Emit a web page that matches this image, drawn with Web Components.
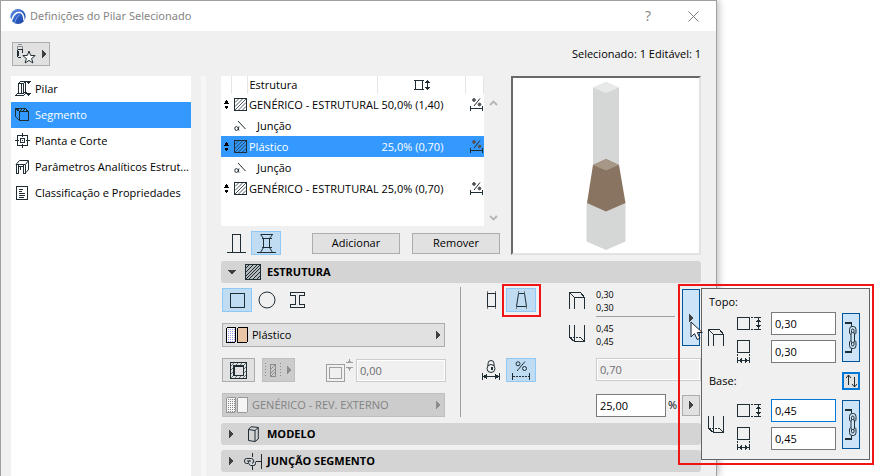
<!DOCTYPE html>
<html lang="pt">
<head>
<meta charset="utf-8">
<title>Definições do Pilar Selecionado</title>
<style>
  html, body { margin: 0; background: #fff; }
  body {
    font: 11px/16px "Open Sans", "Noto Sans", sans-serif;
    color: #000; overflow-x: hidden;
    --ink: #1f2d35; --sel: #3399ff; --panel: #f0f0f0;
  }
</style>
</head>
<body>
<settings-dialog></settings-dialog>
<script>
const hatch = (id, step, color) =>
  `<pattern id="${id}" width="${step}" height="${step}" patternUnits="userSpaceOnUse"><path d="M-1 1L1 -1M0 ${step}L${step} 0M${step - 1} ${step + 1}L${step + 1} ${step - 1}" stroke="${color}" stroke-width="1" shape-rendering="auto"/></pattern>`;

const ICONS = {
  logo: [16, 17, `<defs><linearGradient id="g" x1="0" y1="0" x2="1" y2="1"><stop offset="0" stop-color="#6f9be6"/><stop offset=".5" stop-color="#2f5fc4"/><stop offset="1" stop-color="#1d3f9c"/></linearGradient></defs>
    <g shape-rendering="auto"><circle cx="8" cy="8.500" r="7.600" fill="url(#g)" stroke="none"/><path d="M1.500 12.500C3 7.500 6 4.200 9.500 4.200C12.500 4.400 13.800 8 14 12.500" stroke="#fff" stroke-width="1.500"/><path d="M4.500 15Q6 9 9.800 6.500" stroke="#7fa5ea" stroke-width="1"/></g>`],
  favorite: [20, 22, `<g stroke="#8b9094"><path d="M1.500 2.500v4M6.500 2.500v4M2 1.500h4M2 3.500h4"/></g><path d="M1.500 6.500h5v3M1.500 6.500v7M2 14.500h3M2.500 8v5"/><path shape-rendering="auto" d="M13 8l1.600 4.400 4.600.2-3.600 2.900 1.300 4.500-3.900-2.600-3.900 2.600 1.300-4.500-3.600-2.900 4.600-.2z" fill="#fff"/>`],
  pillar: [17, 17, `<path d="M3.500 2.500h5v10h-5zM5.500 .5h5v11h-2M3.500 2.500l2-2M8.500 2.500l2-2M6.500 3v9"/><path d="M3.500 11.500l-3 3h8l3-3"/><path d="M11.500 .5h4l-2 2zM11.500 12.500h4l-2 2z" fill="#1f2d35"/>`],
  segment: [16, 16, `<defs>${hatch('h', 3, '#1f2d35')}</defs><path d="M.5 1.500h10l3 3h-9z" fill="url(#h)"/><path d="M.5 1.500v8l4 4M4.500 4.500h9v9h-9zM10.500 1.500l3 3"/>`],
  plan: [16, 16, `<path d="M2.500 2.500h10v10h-10zM5.500 5.500h4v4h-4zM7.500 0v4M7.500 11v4M0 7.500h4M11 7.500h4M7 7.500h1"/>`],
  analytic: [16, 16, `<path shape-rendering="auto" d="M1 5.500L4.500 1.500H13.500L10.500 5.500z"/><path d="M1.500 5.500v9M3.500 6v8M10.500 5.500v9M8.500 6v8M13.500 1.500v9M4 7.500h5M1 14.500h3M8 14.500h3M5.500 8v3"/><path shape-rendering="auto" d="M11 13.500l2.500-3"/>`],
  classify: [16, 16, `<path d="M1.500 1.500h11v13h-11zM4 4.500h4M4 6.500h3M4 8.500h6M4 10.500h6M4 12.500h5"/>`],
  height: [17, 12, `<path d="M1.500 1.500h7v9h-7zM0 1.500h10M0 10.500h10"/><path d="M13.500 2v8" stroke-width="1"/><path d="M11 4l2.500-3.500L16 4zM11 8l2.500 3.500L16 8z" fill="#1f2d35" stroke="none"/>`],
  sort: [5, 9, `<path d="M0 3.500L2.500 0L5 3.500zM0 5.500L2.500 9L5 5.500z" fill="#000" stroke="none"/>`],
  hatchbox: [13, 13, `<path d="M.5 .5h12v12h-12z"/><path shape-rendering="auto" d="M1 4.500L4.500 1M1 8.500L8.500 1M1 12L12 1M4.500 12L12 4.500M8.500 12L12 8.500" stroke-width=".8"/>`],
  angle: [13, 12, `<path shape-rendering="auto" d="M4 1l7.500 8"/><path shape-rendering="auto" d="M5 6.500Q4.500 10.500 2.500 10.500Q.8 10.500 .8 8.500Q.8 6.500 2.500 6.500Q4 6.500 5 10.500"/>`],
  percent: [14, 13, `<g shape-rendering="auto"><path d="M4 8L10 .5"/><circle cx="4" cy="2" r="1.400" fill="#555" stroke="#555"/><circle cx="9.500" cy="6.500" r="1.400" fill="#555" stroke="#555"/></g><path d="M.5 8v5M12.500 8v5M1 10.500h11"/>`],
  up: [9, 9, `<path d="M1 6l3.500-3.500L8 6" stroke="#b5b5b5" stroke-width="1.800" shape-rendering="auto"/>`],
  down: [9, 9, `<path d="M1 3l3.500 3.500L8 3" stroke="#b5b5b5" stroke-width="1.800" shape-rendering="auto"/>`],
  simple: [19, 19, `<path d="M5.500 18V.5h8V18M0 18.500h19"/>`],
  complex: [19, 19, `<path d="M3.500 .5h12M6.500 4.500h6v9h-6zM0 18.500h19M4.500 4.500h10M4.500 13.500h10"/><path shape-rendering="auto" d="M3.500 .5l3 4M15.500 .5l-3 4M6.500 13.500l-3 5M12.500 13.500l3 5"/>`],
  tridown: [8, 5, `<path d="M0 0h8L4 4.500z" fill="#404040" stroke="none"/>`],
  triright: [5, 8, `<path d="M0 0v8L5 4z" fill="currentColor" stroke="none"/>`],
  fill: [16, 16, `<path d="M.5 .5h15v15h-15z" fill="#b4b8ba"/><path shape-rendering="auto" d="M1 4L4 1M1 8L8 1M1 12L12 1M1 15L15 1M4 15L15 4M8 15L15 8M12 15L15 12"/>`],
  square: [15, 15, `<path d="M.5 .5h14v14h-14z"/>`],
  circle: [18, 18, `<circle cx="9" cy="9" r="8" shape-rendering="auto"/>`],
  ibeam: [15, 17, `<path d="M.5 .5h14v3h-5v9h5v3h-14v-3h5v-9h-5z"/>`],
  plastic: [22, 16, `<defs><pattern id="d" width="2" height="2" patternUnits="userSpaceOnUse"><g stroke="none"><rect width="2" height="2" fill="#fff"/><rect width="1" height="1" fill="#9797ea"/></g></pattern></defs><rect x=".5" y=".5" width="9" height="15" rx="1.500" fill="url(#d)" stroke="#000"/><rect x="11.500" y=".5" width="10" height="15" rx="1.500" fill="#e8c5a5" stroke="#000"/>`],
  finish: [22, 16, `<defs><pattern id="d" width="2" height="2" patternUnits="userSpaceOnUse"><g stroke="none"><rect width="2" height="2" fill="#f5f5f5"/><rect width="1" height="1" fill="#888"/></g></pattern></defs><rect x=".5" y=".5" width="9" height="15" rx="1.500" fill="url(#d)" stroke="#999"/><rect x="11.500" y=".5" width="10" height="15" rx="1.500" fill="#f5f5f5" stroke="#999"/>`],
  veneer: [17, 17, `<path shape-rendering="auto" stroke="#6a7378" d="M1 4L4 1M5 4L8 1M9 4L12 1M13 4L16 1M13 8L16 5M13 12L16 9M13 16L16 13M1 8L4 5M1 12L4 9M1 16L4 13M5 16L8 13M9 16L12 13"/><path d="M.5 .5h16v16h-16zM4 4h9v9h-9z" /><path d="M3.500 3.500h10v10h-10z"/><path d="M5 5h7v7H5z" fill="#e1e1e1" stroke="none"/>`],
  veneerwall: [16, 14, `<g stroke="#8c8c8c"><path d="M.5 0v14M15.500 0v14" stroke-dasharray="1 2"/><path d="M5.500 1.500h5v12h-5z"/><path shape-rendering="auto" d="M6 6l4-4M6 10l4-4M6 13l4-4"/></g>`],
  thickness: [27, 23, `<g stroke="#a0a0a0"><path d="M.5 5.500h18v17h-18zM3.500 8.500h12v11h-12z"/><path d="M20 3.500h7M20 8.500h7M23.500 0v3M23.500 9v3M22 2.500h3M22 9.500h3"/></g>`],
  rect: [11, 19, `<path d="M1.500 2.500h8v13h-8z"/><path d="M1.500 0v2M9.500 0v2M1.500 16v2M9.500 16v2" stroke="#777"/>`],
  taper: [13, 19, `<path d="M3.500 2.500h6l2 13h-10z" shape-rendering="auto"/><path d="M3.500 0v2M9.500 0v2M1.500 16v2M11.500 16v2" stroke="#777"/>`],
  top3d: [17, 18, `<path d="M.5 17V.5h11l4 5V17M.5 .5l5 5h10M5.500 5.500V17"/>`],
  base3d: [17, 18, `<path d="M.5 0v12.500l5 4h10V0M5.500 0v16M15.500 16.500l-4-4"/><path d="M1 12.500h11" stroke-dasharray="2 1"/>`],
  lock: [18, 20, `<g shape-rendering="auto"><path d="M6 6V3.500a3 3 0 0 1 6 0V6"/><circle cx="9" cy="8.500" r="4"/></g><path d="M9.500 7v3" stroke-width="2"/><path d="M.5 13v7M17.500 13v7M1 16.500h16"/><path d="M1 16.500l4-3v6zM17 16.500l-4-3v6z" fill="#1f2d35" stroke="none"/>`],
  pctwidth: [18, 19, `<g shape-rendering="auto"><circle cx="6" cy="2.800" r="2"/><circle cx="12.500" cy="7.500" r="2"/><path d="M5 10L13 .5"/></g><path d="M.5 12v7M17.500 12v7"/><path d="M1 15.500h16" stroke-dasharray="2 1"/>`],
  model: [11, 16, `<path shape-rendering="auto" d="M.5 3.500L3 .7L10.300 1.500V13L7 15.500L.5 14.500zM.5 3.500L7 4.500L10.300 1.500M7 4.500V15.500"/>`],
  junction: [18, 17, `<path d="M17.500 1v15M12 8.500h5M8.500 0v4M8.500 13v4"/><g shape-rendering="auto"><path d="M4 10.500H2.500Q.5 10.500 .5 8T2.500 5.500H7.500Q9.500 5.500 9.500 8T8 10.500"/><path d="M5.500 7.500Q4.500 7.500 4.500 9.500T6.500 12.500H9.500Q11.500 12.500 11.500 10.500T11 8.500M3 8h4"/></g>`],
  dimh: [24, 14, `<path d="M.5 .5h12v12h-12z"/><path d="M14 .5h6M14 12.500h6" stroke-dasharray="2 1"/><path d="M21.500 1v11M19 .5h5M19 12.500h5"/><path d="M19 5L21.500 1l2.500 4zM19 8L21.500 12l2.500-4z" fill="#1f2d35" stroke="none"/>`],
  dimw: [24, 24, `<path d="M.5 .5h12v12h-12z"/><path d="M.5 14v5M12.500 14v5" stroke-dasharray="2 1"/><path d="M.5 18v5M12.500 18v5M1 20.500h11"/><path d="M1 20.500l4-2.500v5zM12 20.500l-4-2.500v5z" fill="#1f2d35" stroke="none"/>`],
  chain: [12, 33, `<path d="M0 2h7M0 31h7" stroke-width="2"/><path d="M6.500 2v3M6.500 28v3"/><g shape-rendering="auto"><path d="M5.500 13.500Q4.500 13 4.500 11V8.500Q4.500 5.500 7 5.500H8.500Q11 5.500 11 8.500V11Q11 13 10 13.500M5.500 19.500Q4.500 20 4.500 22V24.500Q4.500 27.500 7 27.500H8.500Q11 27.500 11 24.500V22Q11 20 10 19.500"/><path d="M6.500 11.500V9.500Q6.500 8 7.800 8T9 9.500V11.500M6.500 21.500V23.500Q6.500 25 7.800 25T9 23.500V21.500"/><rect x="6" y="11.500" width="3.500" height="10" rx="1.500"/></g>`],
  swap: [11, 14, `<path d="M2.500 1v10M8.500 3v10"/><path d="M0 4l2.500-3 2.500 3M6 10l2.500 3 2.500-3" shape-rendering="auto"/>`],
  close: [11, 11, `<path shape-rendering="auto" d="M.5 .5l10 10M10.500 .5l-10 10" stroke="#7c7c7c"/>`],
  cursor: [15, 20, `<path shape-rendering="auto" d="M1 1v15l3.500-3.500 2.700 6 2.800-1.300-2.700-5.700h5z" fill="#fff" stroke="#17202c"/>`]
};

const define = (name, css, html) => {
  customElements.define(name, class extends HTMLElement {
    constructor() { super(); this.attachShadow({ mode: 'open' }); }
    connectedCallback() {
      const body = typeof html === 'function' ? html(this) : html;
      this.shadowRoot.innerHTML = `<style>*{box-sizing:border-box}:host{box-sizing:border-box}${css}</style>${body}`;
    }
  });
};

define('ui-icon', ':host{display:block;flex:none}svg{display:block}', el => {
  const [w, h, body] = ICONS[el.getAttribute('name')];
  return `<svg width="${w}" height="${h}" viewBox="0 0 ${w} ${h}" fill="none" stroke="#1f2d35" shape-rendering="crispEdges" aria-hidden="true">${body}</svg>`;
});

define('tool-button', `
  :host{display:block;position:relative;width:30px;height:24px}
  button{display:flex;width:100%;height:100%;padding:0;align-items:center;justify-content:center;gap:6px;border:1px solid transparent;background:none;font:inherit;color:#404040}
  :host([kind=on]) button{background:#c0dcf3;border-color:#90c8f6}
  :host([kind=push]) button{background:#e1e1e1;border-color:#adadad}
  :host([kind=off]) button{background:#ccc;border-color:#bfbfbf;color:#8c8c8c}
  :host([kind=active]) button{background:#cce4f7;border-color:#005499}
  :host([kind=focus]) button{background:#e1e1e1;border:2px solid #0078d7}
  :host([kind=text]) button{background:#e1e1e1;border-color:#adadad;color:#000}
  :host([marked])::after{content:"";position:absolute;inset:-4px -5px -5px -4px;border:2px solid #f01414;pointer-events:none}
`, el => `<button type="button" aria-label="${el.getAttribute('label')}" ${el.getAttribute('kind') === 'off' ? 'disabled' : ''}><slot></slot></button>`);

define('combo-button', `
  :host{display:block;height:24px;margin-right:15px}
  button{display:flex;align-items:center;width:100%;height:100%;padding:0 3px;gap:4px;border:1px solid #adadad;background:#e1e1e1;font:inherit;color:#000;text-align:left}
  span{flex:1}
  .arrow{color:#404040}
  button:disabled{background:#ccc;border-color:#bfbfbf;color:#838383}
  button:disabled .arrow{color:#8c8c8c}
`, el => `<button type="button" ${el.hasAttribute('off') ? 'disabled' : ''}><ui-icon name="${el.getAttribute('icon')}"></ui-icon><span><slot></slot></span><ui-icon class="arrow" name="triright"></ui-icon></button>`);

define('value-field', `
  :host{display:block;height:23px;min-width:0}
  input{display:block;width:100%;height:100%;margin:0;padding:0 3px;border:1px solid #7a7a7a;border-radius:0;background:#fff;font:inherit;color:#000;outline:none}
  input:disabled{background:#f0f0f0;border-color:#ccc;box-shadow:inset 0 0 0 1px #fff;color:#6d6d6d}
  :host([focused]) input{border-color:#0078d7}
`, el => `<input type="text" aria-label="${el.getAttribute('label')}" value="${el.getAttribute('value')}" ${el.hasAttribute('off') ? 'disabled' : ''}>`);

define('title-bar', `
  :host{display:flex;align-items:center;height:30px;background:#fff;padding:0 17px 0 9px;gap:4px;color:#858585}
  h1{font:inherit;font-family:"Noto Sans","Open Sans",sans-serif;margin:0;flex:1}
  button{border:0;background:none;padding:0;font:inherit;font-size:14px;color:#858585;width:12px;display:grid;place-items:center}
  .x{margin-left:29px}
`, `<ui-icon name="logo"></ui-icon><h1><slot></slot></h1><button type="button" aria-label="Ajuda">?</button><button type="button" class="x" aria-label="Fechar"><ui-icon name="close"></ui-icon></button>`);

define('nav-item', `
  :host{display:block}
  a{display:grid;grid-template-columns:20px 1fr;align-items:center;height:26px;padding-left:4px;color:#000;text-decoration:none}
  span{white-space:nowrap;overflow:hidden;text-overflow:ellipsis}
  :host([selected]) a{background:var(--sel);color:#fff}
`, el => `<a href="#${el.getAttribute('icon')}"><ui-icon name="${el.getAttribute('icon')}"></ui-icon><span><slot></slot></span></a>`);

define('nav-list', ':host{display:block;background:#fff}', `<nav>
  <nav-item icon="pillar">Pilar</nav-item>
  <nav-item icon="segment" selected>Segmento</nav-item>
  <nav-item icon="plan">Planta e Corte</nav-item>
  <nav-item icon="analytic">Parâmetros Analíticos Estrut...</nav-item>
  <nav-item icon="classify">Classificação e Propriedades</nav-item></nav>`);

const segmentRow = (name, value, cls = '') => `<tr class="${cls}"><td class="c"><ui-icon name="sort"></ui-icon></td><td><ui-icon name="hatchbox"></ui-icon></td><td>${name}</td><td>${value}</td><td><ui-icon name="percent"></ui-icon></td></tr>`;
const joinRow = '<tr><td></td><td><ui-icon name="angle"></ui-icon></td><td class="join">Junção</td><td></td><td></td></tr>';

define('segment-table', `
  :host{display:grid;grid-template-columns:1fr 18px;height:150px}
  .box{background:#fff}
  table{width:100%;border-collapse:collapse;table-layout:fixed}
  th{font-weight:400;text-align:left;height:18px;padding:0 0 0 2px;border-right:1px solid #e5e5e5}
  th:nth-child(4) ui-icon{margin:0 auto;width:17px}
  td{height:21px;padding:0 0 0 2px;white-space:nowrap}
  td:first-child,td:nth-child(2){padding-left:3px}
  td:nth-child(4),td:nth-child(5){padding-left:4px}
  .join{padding-left:10px}
  .sel{background:var(--sel);color:#fff}
  .bar{display:flex;flex-direction:column;justify-content:space-between;align-items:center;padding:23px 0 4px}
`, `<div class="box"><table><colgroup><col style="width:10px"><col style="width:16px"><col><col style="width:88px"><col style="width:18px"></colgroup>
  <thead><tr><th></th><th></th><th>Estrutura</th><th><ui-icon name="height"></ui-icon></th><th></th></tr></thead><tbody>
  ${segmentRow('GENÉRICO - ESTRUTURAL', '50,0% (1,40)')}${joinRow}${segmentRow('Plástico', '25,0% (0,70)', 'sel')}${joinRow}${segmentRow('GENÉRICO - ESTRUTURAL', '25,0% (0,70)')}
  </tbody></table></div><div class="bar"><ui-icon name="up"></ui-icon><ui-icon name="down"></ui-icon></div>`);

define('column-preview', `
  :host{display:flex;justify-content:center;background:#fff;border:2px solid;border-color:#696969 #e3e3e3 #e3e3e3 #696969}
  svg{display:block}
`, `<svg width="40" height="174" viewBox="0 0 40 174" role="img" aria-label="Pré-visualização do pilar">
  <path d="M7 9.500V88H33V9.500L20 4z" fill="#d5d7d6"/><path d="M7 9.500L20 4L33 9.500L20 15z" fill="#e8eae9"/>
  <path d="M.5 125V163.500L20 172L39.500 163.500V125z" fill="#d5d7d6"/>
  <path d="M7 87L1 125L20 133.500L39.500 125L33 87L20 81z" fill="#887461"/><path d="M7 87L20 81L33 87L20 92.500z" fill="#a79786"/></svg>`);

define('section-header', `
  :host{display:block}
  button{display:grid;grid-template-columns:15px 28px 1fr;align-items:center;width:100%;height:22px;padding:0 0 0 3px;border:0;border-radius:3px;background:#d4d4d4;font:inherit;font-weight:700;color:#000;text-align:left}
  ui-icon{justify-self:center;color:#404040}
`, el => `<button type="button" aria-expanded="${el.hasAttribute('open')}"><ui-icon name="${el.hasAttribute('open') ? 'tridown' : 'triright'}"></ui-icon><ui-icon name="${el.getAttribute('icon')}"></ui-icon><slot></slot></button>`);

define('size-group', `
  :host{display:block}
  header{display:flex;justify-content:space-between;align-items:center;height:18px;padding-left:1px}
  .grid{display:grid;grid-template-columns:23px 28px 1fr 18px;column-gap:6px;align-items:center;margin-top:9px}
  .stack{display:grid;gap:5px}
  .cell{height:23px;display:flex;align-items:center}
  .cell+.cell{align-items:flex-start}
  :host([tight]) .grid{margin-top:1px}
`, el => `<header><span>${el.getAttribute('name')}:</span><slot></slot></header>
  <div class="grid"><ui-icon name="${el.getAttribute('icon')}"></ui-icon>
  <div class="stack"><div class="cell"><ui-icon name="dimh"></ui-icon></div><div class="cell"><ui-icon name="dimw"></ui-icon></div></div>
  <div class="stack"><value-field label="${el.getAttribute('name')}, altura" value="${el.getAttribute('value')}" ${el.hasAttribute('focused') ? 'focused' : ''}></value-field><value-field label="${el.getAttribute('name')}, largura" value="${el.getAttribute('value')}"></value-field></div>
  <tool-button kind="active" label="Ligar valores" style="width:18px;height:49px"><ui-icon name="chain"></ui-icon></tool-button></div>`);

define('size-popup', `
  :host{display:grid;gap:9px;width:169px;padding:4px 9px 9px 6px;background:var(--panel);border:1px solid #646464;z-index:2}
  :host::before{content:"";position:absolute;inset:-5px -5px -6px -24px;border:2px solid #f01414;pointer-events:none}
`, `<size-group tight name="Topo" icon="top3d" value="0,30"></size-group>
  <size-group name="Base" icon="base3d" value="0,45" focused><tool-button kind="focus" label="Trocar topo e base" style="width:18px;height:18px"><ui-icon name="swap"></ui-icon></tool-button></size-group>`);

define('structure-panel', `
  :host{display:grid;grid-template-columns:1fr 1fr;padding:4px 0 6px}
  .left,.right{display:grid;gap:11px;padding-top:1px;align-content:start}
  .left{border-right:1px solid #a0a0a0;padding-left:1px}
  .row{display:flex;align-items:center;height:24px}
  .grow{flex:1}
  .left .thick{margin-left:31px;margin-right:3px}
  .left value-field{margin-right:14px}
  .right{padding-left:15px}
  .line{display:grid;grid-template-columns:60px 60px 1fr;align-items:start}
  .pair{display:flex}
  .icons{display:grid;justify-content:end;gap:15px;padding:4px 10px 0 0}
  .sizes{display:flex;gap:7px;height:59px}
  .vals{flex:1;font-size:9px;line-height:13px}
  .vals p{margin:0}
  .vals .a{padding-bottom:2px;border-bottom:1px solid #a0a0a0}
  .vals .b{padding-top:5px}
  .anchor{position:relative;margin:1px 1px 0 0;height:57px}
  size-popup{position:absolute;left:19px;top:-1px}
  .cursor{position:absolute;left:8px;top:32px;z-index:3;pointer-events:none}
  .pct{display:grid;grid-template-columns:1fr 16px 18px;align-items:center;margin-right:1px;height:24px}
  .pct span{padding-left:2px}
`, `<div class="left">
    <div class="row"><tool-button kind="on" label="Retangular"><ui-icon name="square"></ui-icon></tool-button><tool-button label="Circular"><ui-icon name="circle"></ui-icon></tool-button><tool-button label="Perfil"><ui-icon name="ibeam"></ui-icon></tool-button></div>
    <combo-button icon="plastic">Plástico</combo-button>
    <div class="row"><tool-button kind="push" label="Revestimento" style="width:33px"><ui-icon name="veneer"></ui-icon></tool-button>
      <tool-button kind="off" label="Tipo de revestimento" style="width:33px;margin-left:7px"><ui-icon name="veneerwall"></ui-icon><ui-icon name="triright"></ui-icon></tool-button>
      <ui-icon class="thick" name="thickness"></ui-icon><value-field class="grow" off label="Espessura do revestimento" value="0,00"></value-field></div>
    <combo-button icon="finish" off>GENÉRICO - REV. EXTERNO</combo-button>
  </div>
  <div class="right">
    <div class="line">
      <div class="pair"><tool-button label="Uniforme"><ui-icon name="rect"></ui-icon></tool-button><tool-button kind="on" marked label="Afunilado"><ui-icon name="taper"></ui-icon></tool-button></div>
      <div class="icons"><ui-icon name="top3d"></ui-icon><ui-icon name="base3d"></ui-icon></div>
      <div class="sizes"><div class="vals"><div class="a"><p>0,30</p><p>0,30</p></div><div class="b"><p>0,45</p><p>0,45</p></div></div>
        <div class="anchor"><tool-button kind="active" label="Dimensões" style="width:18px;height:57px"><ui-icon name="triright"></ui-icon></tool-button><size-popup></size-popup><ui-icon class="cursor" name="cursor"></ui-icon></div></div>
    </div>
    <div class="line"><div class="pair"><tool-button label="Altura fixa"><ui-icon name="lock"></ui-icon></tool-button><tool-button kind="on" label="Altura proporcional"><ui-icon name="pctwidth"></ui-icon></tool-button></div><span></span><value-field off label="Altura" value="0,70"></value-field></div>
    <div class="line"><span></span><span></span><div class="pct"><value-field label="Percentagem" value="25,00"></value-field><span>%</span><tool-button kind="push" label="Mais opções" style="width:18px;height:21px"><ui-icon name="triright"></ui-icon></tool-button></div></div>
  </div>`);

define('settings-dialog', `
  :host{display:flex;flex-direction:column;min-height:100vh;margin-right:161px;background:var(--panel);border:1px solid #a0a0a0;border-bottom:0;box-shadow:2px 0 7px rgba(0,0,0,.25)}
  .tools{display:flex;align-items:center;justify-content:space-between;height:45px;padding:0 15px 0 11px}
  .body{flex:1;display:grid;grid-template-columns:180px 5px minmax(0,1fr);column-gap:10px;padding:0 15px 0 10px}
  .split{background:#f7f7f7}
  main{padding:0 0 4px 5px;display:grid;align-content:start}
  .top{display:grid;grid-template-columns:1fr 190px;column-gap:9px;margin-bottom:6px}
  .btns{display:flex;align-items:center;padding:5px 2px 0 0}
  section-header+section-header{margin-top:5px}
  .btns tool-button:nth-child(n+3){flex:1;height:21px}
  .btns tool-button:nth-child(3){margin:0 12px 0 31px}
`, `<title-bar>Definições do Pilar Selecionado</title-bar>
  <div class="tools"><tool-button kind="push" label="Favoritos" style="width:38px"><ui-icon name="favorite"></ui-icon><ui-icon name="triright"></ui-icon></tool-button><span>Selecionado: 1 Editável: 1</span></div>
  <div class="body"><nav-list></nav-list><div class="split"></div><main>
    <div class="top"><div><segment-table></segment-table>
      <div class="btns"><tool-button label="Simples"><ui-icon name="simple"></ui-icon></tool-button><tool-button kind="on" label="Complexo"><ui-icon name="complex"></ui-icon></tool-button><tool-button kind="text" label="Adicionar">Adicionar</tool-button><tool-button kind="text" label="Remover">Remover</tool-button></div></div>
      <column-preview></column-preview></div>
    <section-header open icon="fill">ESTRUTURA</section-header>
    <structure-panel></structure-panel>
    <section-header icon="model">MODELO</section-header>
    <section-header icon="junction">JUNÇÃO SEGMENTO</section-header>
  </main></div>`);
</script>
</body>
</html>
